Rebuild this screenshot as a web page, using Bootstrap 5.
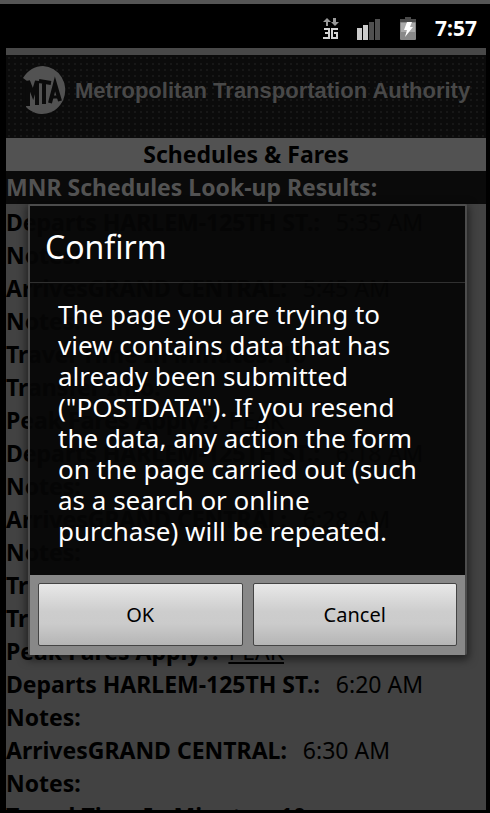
<!DOCTYPE html>
<html lang="en">
<head>
<meta charset="utf-8">
<meta name="viewport" content="width=device-width, initial-scale=1">
<title>Metropolitan Transportation Authority</title>
<link href="https://cdn.jsdelivr.net/npm/bootstrap@5.3.0/dist/css/bootstrap.min.css" rel="stylesheet">
<style>
html, body { height: 100%; }
body { background: #000; color: #000; font-family: "Noto Sans", "Open Sans", sans-serif; border-top: 4px solid #555; overflow: hidden; }
.statusbar { height: 44px; padding: 6px 13px 0 0; gap: 18px; color: #fff; font-size: 21px; font-weight: 700; }
.screen-area { margin: 0 4px 3px 6px; min-height: 0; background: #424242; }
.brand-head { height: 90px; border-top: 7px solid #484848; background-color: #0b0b0b; background-image: radial-gradient(#171717 1px, transparent 1px); background-size: 6px 6px; color: #484848; padding: 0 16px 12px 15px; gap: 8px; font: 700 22px/28px "Liberation Sans", Arial, sans-serif; }
.page-title { background: #525252; font-size: 23px; line-height: 33px; font-weight: 700; }
.results-title { background: #0a0a0a; color: #525252; font-size: 23px; line-height: 33px; font-weight: 700; }
.trips { font-size: 23px; line-height: 33px; padding-top: 2px; }
.trips p { margin: 0; white-space: pre; }
.trips b { margin-right: 4px; }
.trips a { color: #000; }
.confirm-box { top: 200px; left: 28px; right: 23px; color: #fff; background: rgba(5,5,5,.94); border: 2px solid #4c4c4c; border-bottom: 0; border-radius: 2px; box-shadow: 0 3px 8px 2px rgba(0,0,0,.5); }
.confirm-box h1 { font-size: 32px; line-height: 46px; font-weight: 400; padding: 18px 15px 12px; margin: 0; border-bottom: 1px solid #303030; }
.confirm-box p { font-size: 26px; line-height: 31px; padding: 16px 42px 28px 28px; margin: 0; }
.actions { background: #888; padding: 8px 8px 9px; gap: 10px; }
.actions .btn { height: 63px; padding: 0; border: 1px solid #444; border-radius: 2px; color: #000; font-size: 20px; background: linear-gradient(#e8e8e8, #cdcdcd 45%, #cbcbcb 65%, #b5b5b5); }
</style>
<script src="https://cdn.jsdelivr.net/npm/bootstrap@5.3.0/dist/js/bootstrap.bundle.min.js"></script>
</head>
<body class="d-flex flex-column position-relative">
<header class="statusbar d-flex align-items-center justify-content-end flex-shrink-0">
<svg width="16" height="24" viewBox="0 0 16 24" aria-hidden="true"><path fill="#999" d="M0 5 4 1l4 4H5v4H3V5zM8 5h2V1h3v4h3l-4 4z"/><path fill="none" stroke="#d4d4d4" stroke-width="2" d="M1 12h5v9H0M2 16h4M15 12H9v9h5v-5h-3"/></svg>
<svg width="24" height="24" viewBox="0 0 24 24" aria-hidden="true"><path fill="#ccc" d="M0 11h5v12H0zM6 8h5v15H6z"/><path fill="#505050" d="M12 5h5v18h-5zM18 2h5v21h-5z"/></svg>
<svg width="18" height="24" viewBox="0 0 18 24" aria-hidden="true"><path fill="#4a4a4a" d="M6 0h6v2h5v5H1V2h5z"/><rect x="1" y="5" width="16" height="18" rx="1" fill="#888"/><path fill="#aaa" d="M2 6h14v9H2z"/><path fill="#fff" d="M8 5h5l-2 5h3l-8 10 2-7H5z"/></svg>
<span>7:57</span>
</header>
<main class="screen-area flex-grow-1 overflow-hidden">
<div class="brand-head d-flex align-items-center">
<svg class="flex-shrink-0" width="46" height="50" viewBox="0 0 46 50" aria-hidden="true"><path fill="#525252" d="M2 12C7 4 14 0 22 0a23 24 0 1 1-17 41l1-26z"/><path fill="none" stroke="#0b0b0b" stroke-width="4" d="M7 40V15l5 13 4-13v24M18 15l12 2M23 16v22M29 37l5-19 5 17"/><path stroke="#0b0b0b" stroke-width="3" d="M31 31h6M3 18v20"/></svg>
<span class="text-nowrap">Metropolitan Transportation Authority</span>
</div>
<div class="page-title text-center">Schedules &amp; Fares</div>
<div class="results-title">MNR Schedules Look-up Results:</div>
<div class="trips">
<p><b>Departs HARLEM-125TH ST.:</b>  5:35 AM</p>
<p><b>Notes:</b></p>
<p><b>ArrivesGRAND CENTRAL:</b>  5:45 AM</p>
<p><b>Notes:</b></p>
<p><b>Travel Time In Minutes: 10</b></p>
<p><b>Transfer Info:</b></p>
<p><b>Peak Fares Apply?:</b> <a href="#">PEAK</a></p>
<p><b>Departs HARLEM-125TH ST.:</b>  6:18 AM</p>
<p><b>Notes:</b></p>
<p><b>ArrivesGRAND CENTRAL:</b>  6:28 AM</p>
<p><b>Notes:</b></p>
<p><b>Travel Time In Minutes: 10</b></p>
<p><b>Transfer Info:</b></p>
<p><b>Peak Fares Apply?:</b> <a href="#">PEAK</a></p>
<p><b>Departs HARLEM-125TH ST.:</b>  6:20 AM</p>
<p><b>Notes:</b></p>
<p><b>ArrivesGRAND CENTRAL:</b>  6:30 AM</p>
<p><b>Notes:</b></p>
<p><b>Travel Time In Minutes: 10</b></p>
</div>
</main>
<section class="confirm-box position-absolute" role="dialog" aria-labelledby="confirm-title">
<h1 id="confirm-title">Confirm</h1>
<p>The page you are trying to view contains data that has already been submitted ("POSTDATA"). If you resend the data, any action the form on the page carried out (such as a search or online purchase) will be repeated.</p>
<div class="actions d-flex"><button type="button" class="btn flex-fill w-50">OK</button><button type="button" class="btn flex-fill w-50">Cancel</button></div>
</section>
</body>
</html>
